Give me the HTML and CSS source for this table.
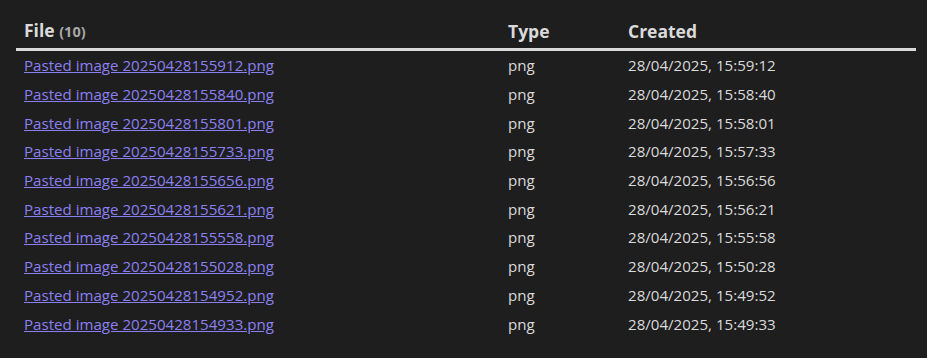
FILE: index.html
```html
<!DOCTYPE html>
<html>
<head>
<meta charset="utf-8">
<link rel="stylesheet" href="styles.css">
</head>
<body>
<table class="dv-table">
  <thead>
    <tr>
      <th class="col-file">File <span class="count">(10)</span></th>
      <th class="col-type">Type</th>
      <th class="col-created">Created</th>
    </tr>
  </thead>
  <tbody>
    <tr><td><a href="#">Pasted image 20250428155912.png</a></td><td>png</td><td>28/04/2025, 15:59:12</td></tr>
    <tr><td><a href="#">Pasted image 20250428155840.png</a></td><td>png</td><td>28/04/2025, 15:58:40</td></tr>
    <tr><td><a href="#">Pasted image 20250428155801.png</a></td><td>png</td><td>28/04/2025, 15:58:01</td></tr>
    <tr><td><a href="#">Pasted image 20250428155733.png</a></td><td>png</td><td>28/04/2025, 15:57:33</td></tr>
    <tr><td><a href="#">Pasted image 20250428155656.png</a></td><td>png</td><td>28/04/2025, 15:56:56</td></tr>
    <tr><td><a href="#">Pasted image 20250428155621.png</a></td><td>png</td><td>28/04/2025, 15:56:21</td></tr>
    <tr><td><a href="#">Pasted image 20250428155558.png</a></td><td>png</td><td>28/04/2025, 15:55:58</td></tr>
    <tr><td><a href="#">Pasted image 20250428155028.png</a></td><td>png</td><td>28/04/2025, 15:50:28</td></tr>
    <tr><td><a href="#">Pasted image 20250428154952.png</a></td><td>png</td><td>28/04/2025, 15:49:52</td></tr>
    <tr><td><a href="#">Pasted image 20250428154933.png</a></td><td>png</td><td>28/04/2025, 15:49:33</td></tr>
  </tbody>
</table>
</body>
</html>
```
FILE: styles.css
```css
html, body {
  margin: 0;
  background: #1e1e1e;
}
body {
  padding: 14px 11px 0 16px;
  font-family: "Open Sans", "Noto Sans", sans-serif;
  color: #dadada;
}
.dv-table {
  width: 900px;
  border-collapse: collapse;
  font-size: 15.1px;
}
.dv-table th {
  text-align: left;
  font-weight: 700;
  font-size: 17.5px;
  line-height: 24px;
  padding: 4px 8px 4px 8px;
  border-bottom: 3px solid #dadada;
  color: #dadada;
}
.count {
  font-size: 14.5px;
  color: #a8a8a8;
  font-weight: 700;
}
.col-file { width: 468px; }
.col-type { width: 104px; }
.dv-table td {
  padding: 0 8px;
  height: 28.7px;
  line-height: 20px;
  color: #dadada;
}
.dv-table a {
  color: #8b80f2;
  text-decoration: underline;
}
```
